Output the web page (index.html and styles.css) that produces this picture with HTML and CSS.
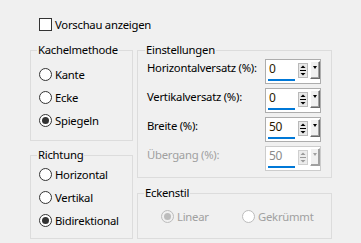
FILE: index.html
```html
<!DOCTYPE html>
<html lang="de">

<head>
    <meta charset="UTF-8">
    <title>Kacheln</title>
    <link rel="stylesheet" href="styles.css">
</head>

<body>
    <label class="check">
        <span class="box"></span>
        <span>Vorschau anzeigen</span>
    </label>

    <div class="main">
        <div class="col-left">
            <fieldset class="group group-method">
                <legend>Kachelmethode</legend>
                <div class="radios">
                    <label class="radio"><span class="dot"></span>Kante</label>
                    <label class="radio"><span class="dot"></span>Ecke</label>
                    <label class="radio on"><span class="dot"></span>Spiegeln</label>
                </div>
            </fieldset>

            <fieldset class="group group-dir">
                <legend>Richtung</legend>
                <div class="radios">
                    <label class="radio"><span class="dot"></span>Horizontal</label>
                    <label class="radio"><span class="dot"></span>Vertikal</label>
                    <label class="radio on"><span class="dot"></span>Bidirektional</label>
                </div>
            </fieldset>
        </div>

        <div class="col-right">
            <fieldset class="group group-settings">
                <legend>Einstellungen</legend>

                <div class="row">
                    <span class="label">Horizontalversatz (%):</span>
                    <div class="spin">
                        <div class="field"><span class="val">0</span><span class="bar"></span></div>
                        <svg class="updown" width="10" height="15" viewBox="0 0 10 15">
                            <rect x="0.5" y="0.5" width="9" height="14" fill="#e8e8e8" stroke="#b9b9b9"/>
                            <path d="M2.5 5h5L5 2.5z" fill="#000"/>
                            <path d="M2 7.5h6" stroke="#000"/>
                            <path d="M2.5 10h5L5 12.5z" fill="#000"/>
                        </svg>
                        <div class="drop"><span class="tri"></span></div>
                    </div>
                </div>

                <div class="row">
                    <span class="label">Vertikalversatz (%):</span>
                    <div class="spin">
                        <div class="field"><span class="val">0</span><span class="bar"></span></div>
                        <svg class="updown" width="10" height="15" viewBox="0 0 10 15">
                            <rect x="0.5" y="0.5" width="9" height="14" fill="#e8e8e8" stroke="#b9b9b9"/>
                            <path d="M2.5 5h5L5 2.5z" fill="#000"/>
                            <path d="M2 7.5h6" stroke="#000"/>
                            <path d="M2.5 10h5L5 12.5z" fill="#000"/>
                        </svg>
                        <div class="drop"><span class="tri"></span></div>
                    </div>
                </div>

                <div class="row">
                    <span class="label">Breite (%):</span>
                    <div class="spin">
                        <div class="field"><span class="val">50</span><span class="bar"></span></div>
                        <svg class="updown" width="10" height="15" viewBox="0 0 10 15">
                            <rect x="0.5" y="0.5" width="9" height="14" fill="#e8e8e8" stroke="#b9b9b9"/>
                            <path d="M2.5 5h5L5 2.5z" fill="#000"/>
                            <path d="M2 7.5h6" stroke="#000"/>
                            <path d="M2.5 10h5L5 12.5z" fill="#000"/>
                        </svg>
                        <div class="drop"><span class="tri"></span></div>
                    </div>
                </div>

                <div class="row off">
                    <span class="label">Übergang (%):</span>
                    <div class="spin">
                        <div class="field"><span class="val">50</span><span class="bar"></span></div>
                        <svg class="updown" width="10" height="15" viewBox="0 0 10 15">
                            <rect x="0.5" y="0.5" width="9" height="14" fill="#ececec" stroke="#cfcfcf"/>
                            <path d="M2.5 5h5L5 2.5z" fill="#9a9a9a"/>
                            <path d="M2 7.5h6" stroke="#9a9a9a"/>
                            <path d="M2.5 10h5L5 12.5z" fill="#9a9a9a"/>
                        </svg>
                        <div class="drop"><span class="tri"></span></div>
                    </div>
                </div>
            </fieldset>

            <fieldset class="group group-corner">
                <legend>Eckenstil</legend>
                <div class="inline">
                    <label class="radio off on"><span class="dot"></span>Linear</label>
                    <label class="radio off"><span class="dot"></span>Gekrümmt</label>
                </div>
            </fieldset>
        </div>
    </div>
</body>

</html>
```

FILE: styles.css
```css
body {
    margin: 0;
    background-color: #f0f0f0;
    color: #000;
    font-family: "Noto Sans", "Open Sans", sans-serif;
    font-size: 11.3px;
    line-height: 16px;
    letter-spacing: -0.25px;
}

/* checkbox */

.check {
    display: flex;
    align-items: center;
    gap: 3px;
    margin: 17px 0 0 39px;
    height: 15px;
}

.check .box {
    width: 11px;
    height: 11px;
    border: 1px solid #333;
    background-color: #fff;
}

/* layout */

.main {
    display: flex;
    gap: 4px;
    margin: 10px 0 0 30px;
}

.col-left,
.col-right {
    display: flex;
    flex-direction: column;
}

.col-left {
    width: 103px;
    gap: 6px;
}

.col-right {
    width: 195px;
    gap: 7px;
}

/* groups */

.group {
    margin: 0;
    padding: 0 0 0 8px;
    min-width: 0;
    border: 1px solid #dcdcdc;
}

.group legend {
    margin-left: -2px;
    padding: 0 1px;
    line-height: 16px;
}

.group-method {
    height: 99px;
    box-sizing: border-box;
    padding-top: 10px;
}

.group-dir {
    height: 92px;
    box-sizing: border-box;
    padding-top: 5px;
}

.group-settings {
    height: 136px;
    box-sizing: border-box;
    padding: 1px 10px 0 9px;
}

.group-corner {
    height: 54px;
    box-sizing: border-box;
    padding-top: 9px;
}

/* radio buttons */

.radios {
    display: flex;
    flex-direction: column;
    gap: 10px;
}

.radio {
    display: flex;
    align-items: center;
    gap: 3px;
    height: 13px;
    white-space: nowrap;
}

.radio .dot {
    position: relative;
    flex: none;
    width: 11px;
    height: 11px;
    border: 1px solid #333;
    border-radius: 50%;
    background-color: #fff;
}

.radio.on .dot::after {
    content: "";
    position: absolute;
    left: 2px;
    top: 2px;
    width: 7px;
    height: 7px;
    border-radius: 50%;
    background-color: #333;
}

.radio.off {
    color: #a0a0a0;
}

.radio.off .dot {
    border-color: #bcbcbc;
}

.radio.off.on .dot {
    background-color: #f0f0f0;
}

.radio.off.on .dot::after {
    background-color: #bcbcbc;
}

.inline {
    display: flex;
    padding-left: 15px;
}

.inline .radio:first-child {
    width: 81px;
}

/* spinner rows */

.row {
    display: flex;
    align-items: flex-start;
    justify-content: space-between;
    height: 25px;
    margin-bottom: 4px;
}

.row .label {
    padding-top: 1px;
}

.row.off .label {
    color: #a0a0a0;
}

.spin {
    display: flex;
    align-items: flex-start;
    width: 54px;
    height: 23px;
    border: 1px solid #adadad;
    background-color: #fff;
}

.field {
    display: flex;
    flex-direction: column;
    width: 31px;
    height: 23px;
}

.field .val {
    padding: 1px 0 0 3px;
    line-height: 16px;
    font-size: 12px;
    color: #2b1a00;
}

.field .bar {
    width: 27px;
    height: 2px;
    margin: auto 0 2px 2px;
    background-color: #0078d7;
}

.updown {
    display: block;
    margin: 3px 0 0 1px;
}

.drop {
    position: relative;
    box-sizing: border-box;
    width: 10px;
    height: 18px;
    margin: 1px 0 0 2px;
    background-color: #f0f0f0;
    border-top: 1px solid #fff;
    border-left: 1px solid #fff;
    border-right: 1px solid #696969;
    border-bottom: 1px solid #696969;
    box-shadow: inset -1px -1px 0 #a0a0a0;
}

.drop .tri {
    position: absolute;
    left: 2px;
    top: 4px;
    border-left: 2.5px solid transparent;
    border-right: 2.5px solid transparent;
    border-top: 3px solid #000;
}

.row.off .spin {
    border-color: #cccccc;
}

.row.off .val {
    color: #8a8a8a;
}

.row.off .drop .tri {
    border-top-color: #a0a0a0;
}

.row.off .drop {
    border-right-color: #a0a0a0;
    border-bottom-color: #a0a0a0;
}
```
